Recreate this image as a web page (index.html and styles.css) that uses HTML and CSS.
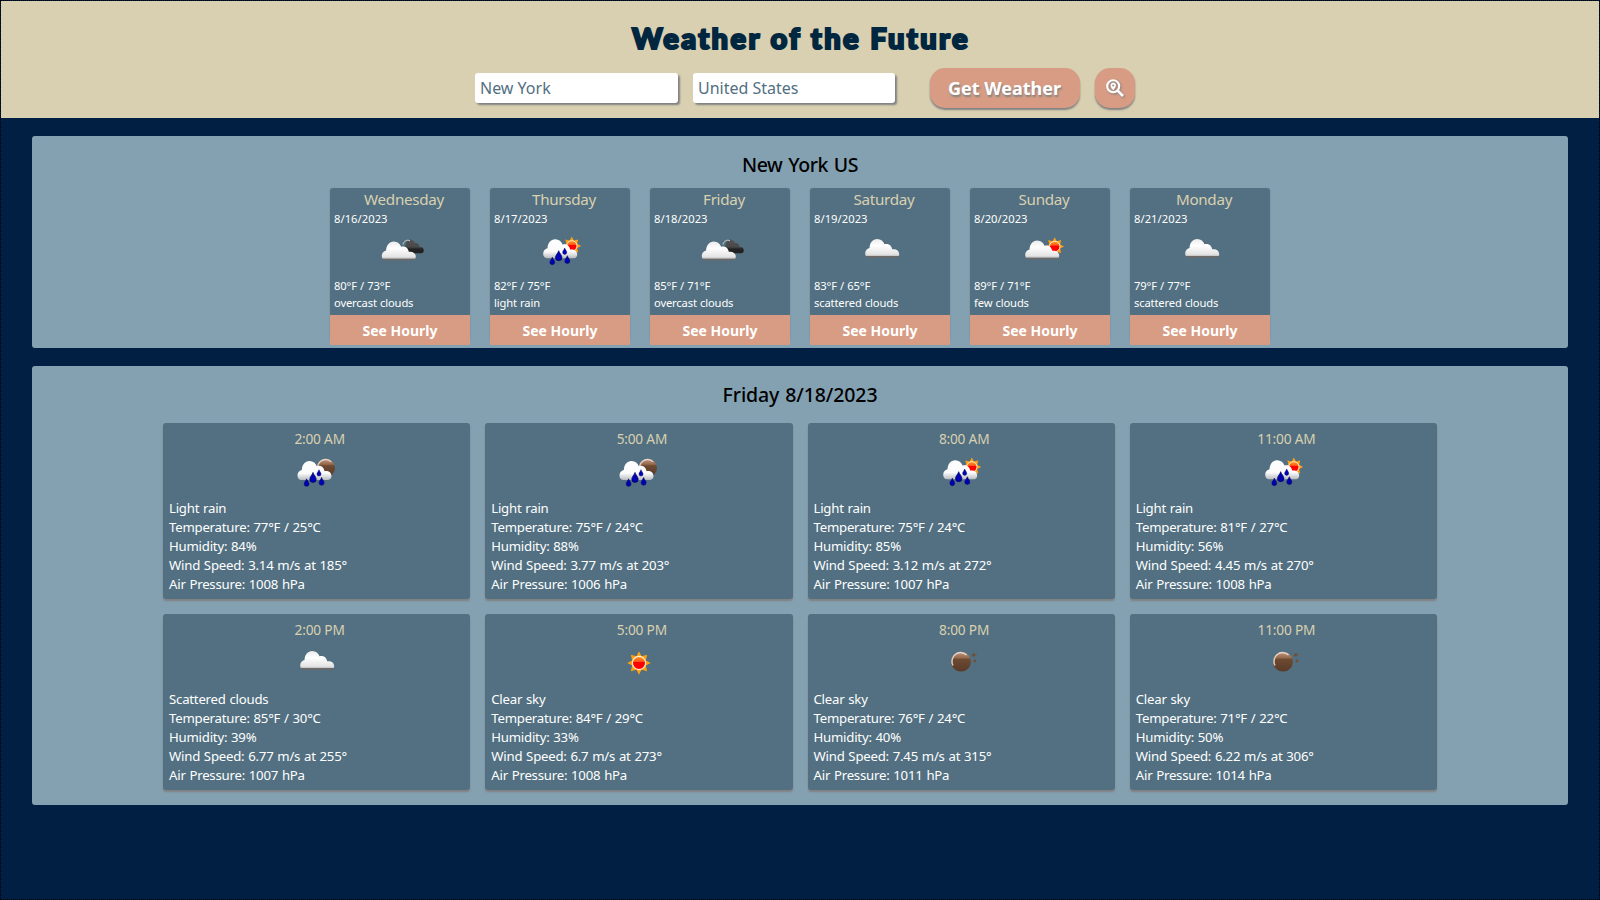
FILE: index.html
```html
<!DOCTYPE html>
<html lang="en">
<head>
<meta charset="utf-8">
<title>Weather of the Future</title>
<link rel="stylesheet" href="styles.css">
</head>
<body>
<svg class="defs" width="0" height="0" aria-hidden="true">
  <defs>
    <linearGradient id="g-cloud" x1="0" y1="0" x2="0" y2="1">
      <stop offset="0" stop-color="#ececec"/><stop offset=".35" stop-color="#fff"/><stop offset=".8" stop-color="#e4e4e4"/><stop offset=".88" stop-color="#c8c8c8"/><stop offset=".92" stop-color="#6a6a6a"/><stop offset="1" stop-color="#6a6a6a"/>
    </linearGradient>
    <linearGradient id="g-dark" x1="0" y1="0" x2="0" y2="1">
      <stop offset="0" stop-color="#555"/><stop offset=".55" stop-color="#484848"/><stop offset=".7" stop-color="#222"/><stop offset="1" stop-color="#222"/>
    </linearGradient>
    <linearGradient id="g-rain" x1="0" y1="0" x2="0" y2="1">
      <stop offset="0" stop-color="#fff"/><stop offset=".65" stop-color="#fbfbfb"/><stop offset="1" stop-color="#b9bcc0"/>
    </linearGradient>
    <linearGradient id="g-sun" x1="0" y1="0" x2="0" y2="1">
      <stop offset="0" stop-color="#ff9a2a"/><stop offset=".38" stop-color="#ff5a14"/><stop offset=".45" stop-color="#f00"/><stop offset="1" stop-color="#f00"/>
    </linearGradient>
    <linearGradient id="g-moon" x1="0" y1="0" x2="0" y2="1">
      <stop offset="0" stop-color="#c09a82"/><stop offset=".3" stop-color="#96694b"/><stop offset=".38" stop-color="#6d4a32"/><stop offset="1" stop-color="#573a27"/>
    </linearGradient>
    <path id="cloud-shape" d="M4 19C1.400 19 0 17 0 14.500C0 11.700 1.600 9.500 4.300 9C4.600 3.500 7.600 0 12 0C15.800 0 18.300 2.200 19.300 5.300C23.200 4 26.400 6.500 27 10.300C30.800 9.700 34 11.600 34 15.200C34 17.500 32.700 19 30.500 19Z"/>
    <path id="drop" d="M0 -5C.5 -2.800 3.200 -.6 3.200 1.800A3.200 3.200 0 0 1 -3.200 1.800C-3.200 -.6 -.5 -2.800 0 -5Z" fill="#0000b4" stroke="#00005e" stroke-width=".7"/>
    <g id="sun">
      <path fill="#ffa011" d="M0 -11.800L2.600 -6.800L8.200 -8.200L6.800 -2.600L11.800 0L6.800 2.600L8.200 8.200L2.600 6.800L0 11.800L-2.600 6.800L-8.200 8.200L-6.800 2.600L-11.800 0L-6.800 -2.600L-8.200 -8.200L-2.600 -6.800Z"/>
      <circle r="6.600" fill="url(#g-sun)" stroke="#ffeed0" stroke-width="1.200"/>
    </g>
    <g id="moon">
      <circle r="9.900" fill="url(#g-moon)"/>
      <path d="M-8 3.800A8.700 8.700 0 0 1 5.500 -6.800" fill="none" stroke="#ecdcd2" stroke-width="1.500" opacity=".9"/>
    </g>
    <g id="rainfall">
      <use href="#cloud-shape" x="4.200" y="12" fill="url(#g-rain)"/>
      <use href="#drop" transform="translate(13.300 33.700) scale(.75)"/>
      <use href="#drop" transform="translate(19.700 28.500)"/>
      <use href="#drop" transform="translate(25.700 24) scale(.64)"/>
      <use href="#drop" transform="translate(28.300 32.400) scale(.78)"/>
    </g>
    <symbol id="overcast" viewBox="0 0 50 50">
      <use href="#cloud-shape" transform="translate(24 11.500) scale(.61 .72)" fill="url(#g-dark)"/>
      <path d="M24 16.500C25 12.800 28 11.300 31 12.800" fill="none" stroke="#ccc" stroke-width="1"/>
      <use href="#cloud-shape" x="2.800" y="13.500" fill="url(#g-cloud)"/>
    </symbol>
    <symbol id="scattered" viewBox="0 0 50 50"><use href="#cloud-shape" x="6.200" y="11" fill="url(#g-cloud)"/></symbol>
    <symbol id="few" viewBox="0 0 50 50">
      <use href="#sun" transform="translate(35.700 18.500) scale(.79)"/>
      <use href="#cloud-shape" x="6.200" y="12.500" fill="url(#g-cloud)"/>
    </symbol>
    <symbol id="rain-day" viewBox="0 0 50 50">
      <g transform="translate(0 -.8)">
        <use href="#sun" transform="translate(32.800 18.700) scale(.79)"/>
        <use href="#rainfall"/>
      </g>
    </symbol>
    <symbol id="rain-night" viewBox="0 0 50 50">
      <use href="#moon" transform="translate(31.900 18.900) scale(.92)"/>
      <use href="#rainfall" transform="translate(-.7 -.1)"/>
    </symbol>
    <symbol id="clear-day" viewBox="0 0 50 50"><use href="#sun" x="23" y="23"/></symbol>
    <symbol id="clear-night" viewBox="0 0 50 50">
      <use href="#moon" x="22" y="21.700"/>
      <circle cx="34.700" cy="15" r="1.800" fill="#704e38"/><circle cx="36" cy="21" r="1.400" fill="#704e38"/>
      <circle cx="37.200" cy="14" r=".6" fill="#704e38"/>
    </symbol>
  </defs>
</svg>

<header class="header">
  <h1 class="title">Weather of the Future</h1>
  <form class="search">
    <input class="field" type="text" placeholder="New York" aria-label="City">
    <input class="field" type="text" placeholder="United States" aria-label="Country">
    <button class="btn" type="button">Get Weather</button>
    <button class="btn btn-locate" type="button" aria-label="Use my location">
      <svg class="glass" viewBox="0 0 18 18">
        <circle cx="7.200" cy="7.200" r="6" fill="none" stroke="#fff" stroke-width="2.100"/>
        <path d="M11.600 11.600L17 17" stroke="#fff" stroke-width="2.700"/>
        <path fill="#fff" fill-rule="evenodd" d="M7.200 11.200C5.700 9.400 4.500 7.900 4.500 6.500A2.700 2.700 0 0 1 9.900 6.500C9.900 7.900 8.700 9.400 7.200 11.200ZM7.200 5.500A1 1 0 0 0 7.200 7.500A1 1 0 0 0 7.200 5.500Z"/>
      </svg>
    </button>
  </form>
</header>

<main>
  <section class="panel daily">
    <h2 class="heading">New York US</h2>
    <div class="days">
      <article class="day"><h3 class="name">Wednesday</h3><p class="date">8/16/2023</p><svg class="icon"><use href="#overcast"/></svg><p>80°F / 73°F</p><p>overcast clouds</p><button class="hourly-btn">See Hourly</button></article>
      <article class="day"><h3 class="name">Thursday</h3><p class="date">8/17/2023</p><svg class="icon"><use href="#rain-day"/></svg><p>82°F / 75°F</p><p>light rain</p><button class="hourly-btn">See Hourly</button></article>
      <article class="day"><h3 class="name">Friday</h3><p class="date">8/18/2023</p><svg class="icon"><use href="#overcast"/></svg><p>85°F / 71°F</p><p>overcast clouds</p><button class="hourly-btn">See Hourly</button></article>
      <article class="day"><h3 class="name">Saturday</h3><p class="date">8/19/2023</p><svg class="icon"><use href="#scattered"/></svg><p>83°F / 65°F</p><p>scattered clouds</p><button class="hourly-btn">See Hourly</button></article>
      <article class="day"><h3 class="name">Sunday</h3><p class="date">8/20/2023</p><svg class="icon"><use href="#few"/></svg><p>89°F / 71°F</p><p>few clouds</p><button class="hourly-btn">See Hourly</button></article>
      <article class="day"><h3 class="name">Monday</h3><p class="date">8/21/2023</p><svg class="icon"><use href="#scattered"/></svg><p>79°F / 77°F</p><p>scattered clouds</p><button class="hourly-btn">See Hourly</button></article>
    </div>
  </section>

  <section class="panel hourly">
    <h2 class="heading">Friday 8/18/2023</h2>
    <div class="hours">
      <article class="hour"><h3 class="time">2:00 AM</h3><svg class="icon"><use href="#rain-night"/></svg><p>Light rain</p><p>Temperature: 77°F / 25°C</p><p>Humidity: 84%</p><p>Wind Speed: 3.14 m/s at 185°</p><p>Air Pressure: 1008 hPa</p></article>
      <article class="hour"><h3 class="time">5:00 AM</h3><svg class="icon"><use href="#rain-night"/></svg><p>Light rain</p><p>Temperature: 75°F / 24°C</p><p>Humidity: 88%</p><p>Wind Speed: 3.77 m/s at 203°</p><p>Air Pressure: 1006 hPa</p></article>
      <article class="hour"><h3 class="time">8:00 AM</h3><svg class="icon"><use href="#rain-day"/></svg><p>Light rain</p><p>Temperature: 75°F / 24°C</p><p>Humidity: 85%</p><p>Wind Speed: 3.12 m/s at 272°</p><p>Air Pressure: 1007 hPa</p></article>
      <article class="hour"><h3 class="time">11:00 AM</h3><svg class="icon"><use href="#rain-day"/></svg><p>Light rain</p><p>Temperature: 81°F / 27°C</p><p>Humidity: 56%</p><p>Wind Speed: 4.45 m/s at 270°</p><p>Air Pressure: 1008 hPa</p></article>
      <article class="hour"><h3 class="time">2:00 PM</h3><svg class="icon"><use href="#scattered"/></svg><p>Scattered clouds</p><p>Temperature: 85°F / 30°C</p><p>Humidity: 39%</p><p>Wind Speed: 6.77 m/s at 255°</p><p>Air Pressure: 1007 hPa</p></article>
      <article class="hour"><h3 class="time">5:00 PM</h3><svg class="icon"><use href="#clear-day"/></svg><p>Clear sky</p><p>Temperature: 84°F / 29°C</p><p>Humidity: 33%</p><p>Wind Speed: 6.7 m/s at 273°</p><p>Air Pressure: 1008 hPa</p></article>
      <article class="hour"><h3 class="time">8:00 PM</h3><svg class="icon"><use href="#clear-night"/></svg><p>Clear sky</p><p>Temperature: 76°F / 24°C</p><p>Humidity: 40%</p><p>Wind Speed: 7.45 m/s at 315°</p><p>Air Pressure: 1011 hPa</p></article>
      <article class="hour"><h3 class="time">11:00 PM</h3><svg class="icon"><use href="#clear-night"/></svg><p>Clear sky</p><p>Temperature: 71°F / 22°C</p><p>Humidity: 50%</p><p>Wind Speed: 6.22 m/s at 306°</p><p>Air Pressure: 1014 hPa</p></article>
    </div>
  </section>
</main>
</body>
</html>
```
FILE: styles.css
```css
* { box-sizing: border-box; margin: 0; padding: 0; }

body {
  height: 900px;
  overflow: hidden;
  border: 1px dotted #000;
  background: #001f42;
  font-family: "Noto Sans", sans-serif;
}

.defs { display: block; }

.header {
  height: 117px;
  padding-top: 19px;
  background: #d9d0b1;
}

.title {
  height: 48px;
  padding-left: 2px;
  line-height: 35px;
  text-align: center;
  font-family: Lato, sans-serif;
  font-size: 29px;
  font-weight: 900;
  letter-spacing: 2.4px;
  color: #002640;
  -webkit-text-stroke: 2.2px #002640;
  stroke-linejoin: round;
}

.search {
  display: flex;
  align-items: center;
  height: 40px;
  padding-left: 474px;
}

.field {
  width: 203px;
  height: 30px;
  margin-right: 15px;
  padding: 0 5px;
  border: 0;
  border-radius: 3px;
  background: #fff;
  box-shadow: 2px 2px 2px gray;
  font: 16px "Noto Sans", sans-serif;
}
.field + .field { width: 202px; }
.field::placeholder { color: #527081; opacity: 1; }

.btn {
  width: 150px;
  height: 40px;
  margin-left: 20px;
  padding-right: 1px;
  border: 0;
  border-radius: 15px;
  background: #d79c83;
  box-shadow: 0 2px 2px gray;
  color: #fff;
  font: bold 18px "Noto Sans", sans-serif;
  text-shadow: 1px 2px 2px gray;
}
.btn-locate {
  display: flex;
  align-items: center;
  justify-content: center;
  width: 40px;
  margin-left: 15px;
}
.glass { width: 18px; height: 18px; filter: drop-shadow(1px 1px 1px gray); }

.panel {
  width: 1536px;
  margin: 18px auto 0;
  border-radius: 3px;
  background: #84a1b2;
}

.heading {
  text-align: center;
  font-size: 19.500px;
  font-weight: 500;
  letter-spacing: -0.4px;
  word-spacing: 1px;
  color: #000;
}

.icon { display: block; width: 50px; height: 50px; margin: 0 auto; }

.daily { height: 212px; padding-top: 15px; }
.daily .heading { height: 37px; line-height: 27px; }
.days { display: flex; justify-content: center; gap: 20px; }

.day {
  width: 140px;
  height: 152px;
  border-radius: 3px;
  background: #527081;
  box-shadow: 0 1px 2px gray;
  color: #fff;
}
.day p {
  height: 17px;
  padding-left: 4px;
  line-height: 15px;
  font-size: 11.200px;
  letter-spacing: -0.15px;
  word-spacing: 0.5px;
}
.day .date { letter-spacing: 0.05px; }
.name {
  height: 23px;
  padding-left: 8px;
  line-height: 22px;
  text-align: center;
  font-size: 15.200px;
  font-weight: 400;
  letter-spacing: -0.3px;
  color: #d9d0b1;
}
.day .icon { margin-left: 49px; }
.hourly-btn {
  display: block;
  width: 140px;
  height: 30px;
  margin-top: 3px;
  border: 0;
  background: #d79c83;
  color: #fff;
  font: bold 14px "Noto Sans", sans-serif;
}

.hourly { height: 439px; padding-top: 15px; }
.hourly .heading { height: 42px; line-height: 27px; letter-spacing: -0.1px; }
.hours {
  display: grid;
  grid-template-columns: repeat(4, 1fr);
  gap: 15px;
  width: 1274px;
  margin: 0 auto;
}
.hour {
  height: 176px;
  padding: 6px 0 0 6px;
  border-radius: 3px;
  background: #527081;
  box-shadow: 0 2px 2px gray;
  color: #fff;
}
.hour .icon { margin-left: 125px; }
.hour p {
  height: 19px;
  line-height: 19px;
  font-size: 13.200px;
  letter-spacing: -0.22px;
  word-spacing: 0.6px;
}
.time {
  height: 20px;
  line-height: 19px;
  text-align: center;
  font-size: 13.700px;
  font-weight: 400;
  letter-spacing: -0.2px;
  color: #d9d0b1;
}
```
